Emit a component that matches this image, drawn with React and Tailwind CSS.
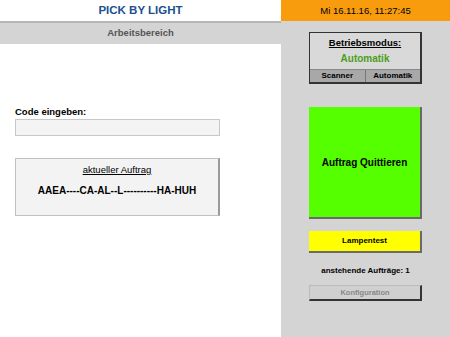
import React from "react";

const font = { fontFamily: "'Liberation Sans', Arial, sans-serif" };

const App = () => {
    return (
        <div className="flex h-[337px] w-[450px] overflow-hidden bg-white text-black" style={font}>
            <div className="flex w-[281px] flex-col">
                <div className="flex h-[21px] items-center justify-center pt-[1px] text-[11.5px] font-bold text-[#1b4f8f]">PICK BY LIGHT</div>
                <div className="flex h-[23px] items-center justify-center border-t-2 border-[#b5b5b5] bg-[#d4d4d4] text-[9.5px] font-bold text-[#555]">Arbeitsbereich</div>
                <div className="flex flex-col px-[15px] pt-[62px]">
                    <label className="text-[9.5px] font-bold leading-[12px]">Code eingeben:</label>
                    <input className="mt-[1px] h-[17px] w-[205px] border border-[#c8c8c8] bg-[#f4f4f4] outline-none" />
                    <div className="mt-[22px] flex h-[58px] w-[205px] flex-col items-center border border-[#c0c0c0] border-r-2 border-r-[#9a9a9a] bg-[#f3f3f3] pt-[5px]">
                        <span className="text-[9.5px] leading-[12px] underline">aktueller Auftrag</span>
                        <span className="mt-[9px] text-[10px] font-bold leading-[12px]">AAEA----CA-AL--L----------HA-HUH</span>
                    </div>
                </div>
            </div>
            <div className="flex flex-1 flex-col">
                <div className="flex h-[21px] items-center justify-center bg-[#f89c0e] pt-[1px] text-[9.5px]">Mi 16.11.16, 11:27:45</div>
                <div className="flex flex-1 flex-col items-center bg-[#d4d4d4] pt-[11px]">
                    <div className="flex h-[52px] w-[113px] flex-col border border-[#333] border-b-2 border-r-2 bg-[#d9d9d9]">
                        <span className="pt-[4px] text-center text-[9.5px] font-bold leading-[12px] underline">Betriebsmodus:</span>
                        <span className="mt-[4px] text-center text-[10px] font-bold leading-[12px] text-[#4c9e1a]">Automatik</span>
                        <div className="mt-auto flex h-[13px] border-t border-[#888] bg-[#a8a8a8] text-[8px] font-bold leading-[12px]">
                            <span className="flex-1 border-r border-[#777] text-center">Scanner</span>
                            <span className="flex-1 text-center">Automatik</span>
                        </div>
                    </div>
                    <button className="mt-[23px] flex h-[112px] w-[113px] items-center justify-center border-b-2 border-r-2 border-[#6a6a6a] bg-[#55ff00] text-[10px] font-bold">Auftrag Quittieren</button>
                    <button className="mt-[12px] flex h-[22px] w-[113px] items-center justify-center border-b-2 border-r-2 border-[#6a6a6a] bg-[#ffff00] text-[8px] font-bold">Lampentest</button>
                    <div className="mt-[12px] text-[8px] font-bold leading-[12px]">anstehende Aufträge: 1</div>
                    <button className="mt-[8px] flex h-[16px] w-[113px] items-center justify-center border border-[#bbb] border-b-2 border-r-2 border-b-[#333] border-r-[#333] bg-[#d0d0d0] text-[7.5px] font-bold text-[#888]">Konfiguration</button>
                </div>
            </div>
        </div>
    );
};

export default App;
